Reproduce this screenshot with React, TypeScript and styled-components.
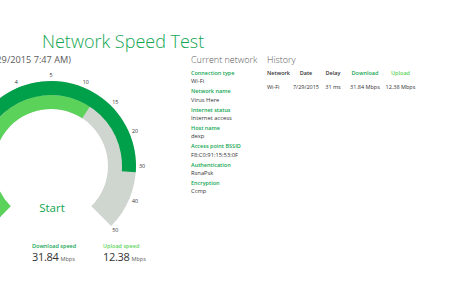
import React from 'react';
import styled, { createGlobalStyle } from 'styled-components';

const Green = '#11a651';
const DarkRing = '#00a04a';
const LightGreen = '#5bd35b';
const GrayRing = '#cfd5cf';
const TextDark = '#333333';
const TextSoft = '#5a5a5a';

const GlobalStyle = createGlobalStyle`
  html, body {
    margin: 0;
    padding: 0;
    background: #ffffff;
    overflow: hidden;
  }
  body {
    font-family: 'Open Sans', 'Noto Sans', sans-serif;
    color: ${TextDark};
  }
`;

const Page = styled.div`
  width: 450px;
  height: 281px;
  overflow: hidden;
  display: flex;
  flex-direction: column;
`;

const Title = styled.h1`
  margin: 32px 0 0 42px;
  font-size: 18px;
  line-height: 18px;
  font-weight: 300;
  color: ${Green};
  white-space: nowrap;
`;

const Content = styled.div`
  display: flex;
  margin-top: 3px;
`;

const LeftPane = styled.div`
  width: 191px;
  flex: none;
  display: flex;
  flex-direction: column;
`;

const SubtitleBox = styled.div`
  width: 71px;
  height: 14px;
  display: flex;
  justify-content: flex-end;
`;

const Subtitle = styled.span`
  font-size: 9.2px;
  line-height: 14px;
  color: ${TextSoft};
  white-space: nowrap;
`;

const GaugeWrap = styled.div`
  position: relative;
  height: 176px;
`;

const GaugeSvg = styled.svg`
  display: block;
  overflow: visible;
`;

const TickLabel = styled.text`
  font-size: 5.3px;
  fill: ${TextDark};
`;

const StartButton = styled.button`
  position: absolute;
  left: 52px;
  top: 140px;
  transform: translate(-50%, -50%);
  border: none;
  background: transparent;
  padding: 0;
  font-family: inherit;
  font-size: 11.5px;
  color: ${Green};
  cursor: pointer;
`;

const Speeds = styled.div`
  display: flex;
  padding-left: 32px;
`;

const SpeedItem = styled.div`
  width: 71px;
  display: flex;
  flex-direction: column;
`;

const SpeedLabel = styled.div<{ $tone: string }>`
  font-size: 5.5px;
  line-height: 7px;
  font-weight: 600;
  color: ${(p) => p.$tone};
  white-space: nowrap;
`;

const SpeedValue = styled.div`
  font-size: 11px;
  line-height: 14px;
  letter-spacing: -0.3px;
  color: ${TextDark};
  white-space: nowrap;
`;

const Unit = styled.span`
  font-size: 5.5px;
  letter-spacing: 0;
  color: ${TextSoft};
  margin-left: 2px;
`;

const NetworkCol = styled.div`
  width: 76px;
  flex: none;
  display: flex;
  flex-direction: column;
`;

const Heading = styled.h2`
  margin: 0;
  font-size: 9px;
  line-height: 14px;
  font-weight: 300;
  color: ${TextSoft};
  white-space: nowrap;
`;

const FieldList = styled.dl`
  margin: 2px 0 0;
`;

const FieldLabel = styled.dt`
  font-size: 5.5px;
  line-height: 8.4px;
  font-weight: 600;
  color: ${Green};
  white-space: nowrap;
`;

const FieldValue = styled.dd`
  margin: 0;
  font-size: 5.8px;
  line-height: 9.9px;
  color: ${TextDark};
  white-space: nowrap;
`;

const HistoryCol = styled.div`
  flex: 1;
  display: flex;
  flex-direction: column;
`;

const HistoryGrid = styled.div`
  margin-top: 2px;
  display: grid;
  grid-template-columns: 24px 30px 24px 40px 31px;
  grid-auto-rows: 8px;
  row-gap: 6px;
`;

const Cell = styled.div<{ $tone?: string; $left?: boolean; $head?: boolean }>`
  font-size: 5.5px;
  line-height: 8px;
  font-weight: ${(p) => (p.$head ? 600 : 400)};
  color: ${(p) => p.$tone ?? TextDark};
  text-align: ${(p) => (p.$left ? 'left' : 'center')};
  white-space: nowrap;
`;

const CX = 51;
const CY = 99;
const TICKS = [0, 0.5, 1, 2, 3, 4, 5, 10, 15, 20, 30, 40, 50];

const toAngle = (v: number) => {
  for (let i = 0; i < TICKS.length - 1; i++) {
    if (v <= TICKS[i + 1]) {
      const f = (v - TICKS[i]) / (TICKS[i + 1] - TICKS[i]);
      return -135 + (i + f) * 22.5;
    }
  }
  return 135;
};

const pt = (r: number, a: number) => {
  const rad = (a * Math.PI) / 180;
  return `${(CX + r * Math.sin(rad)).toFixed(2)} ${(CY - r * Math.cos(rad)).toFixed(2)}`;
};

const sector = (r0: number, r1: number, a0: number, a1: number) => {
  const large = a1 - a0 > 180 ? 1 : 0;
  return `M ${pt(r1, a0)} A ${r1} ${r1} 0 ${large} 1 ${pt(r1, a1)} L ${pt(r0, a1)} A ${r0} ${r0} 0 ${large} 0 ${pt(r0, a0)} Z`;
};

const fields = [
  ['Connection type', 'Wi-Fi'],
  ['Network name', 'Virus Here'],
  ['Internet status', 'Internet access'],
  ['Host name', 'dexp'],
  ['Access point BSSID', 'F8:C0:91:15:53:0F'],
  ['Authentication', 'RsnaPsk'],
  ['Encryption', 'Ccmp'],
];

const download = 31.84;
const upload = 12.38;

const Gauge = () => (
  <GaugeWrap>
    <GaugeSvg width={191} height={176}>
      <path d={sector(57, 85, -135, 135)} fill={GrayRing} />
      <path d={sector(57, 71, -135, toAngle(upload))} fill={LightGreen} />
      <path d={sector(71, 85, -135, toAngle(download))} fill={DarkRing} />
      {TICKS.map((t, i) => {
        const a = ((-135 + i * 22.5) * Math.PI) / 180;
        return (
          <TickLabel
            key={t}
            x={CX + 91 * Math.sin(a)}
            y={CY - 91 * Math.cos(a)}
            textAnchor="middle"
            dominantBaseline="central"
          >
            {t}
          </TickLabel>
        );
      })}
    </GaugeSvg>
    <StartButton>Start</StartButton>
  </GaugeWrap>
);

export default function App() {
  return (
    <Page>
      <GlobalStyle />
      <Title>Network Speed Test</Title>
      <Content>
        <LeftPane>
          <SubtitleBox>
            <Subtitle>Last tested (7/29/2015 7:47 AM)</Subtitle>
          </SubtitleBox>
          <Gauge />
          <Speeds>
            <SpeedItem>
              <SpeedLabel $tone={Green}>Download speed</SpeedLabel>
              <SpeedValue>
                {download.toFixed(2)}
                <Unit>Mbps</Unit>
              </SpeedValue>
            </SpeedItem>
            <SpeedItem>
              <SpeedLabel $tone={LightGreen}>Upload speed</SpeedLabel>
              <SpeedValue>
                {upload.toFixed(2)}
                <Unit>Mbps</Unit>
              </SpeedValue>
            </SpeedItem>
          </Speeds>
        </LeftPane>
        <NetworkCol>
          <Heading>Current network</Heading>
          <FieldList>
            {fields.map(([label, value]) => (
              <React.Fragment key={label}>
                <FieldLabel>{label}</FieldLabel>
                <FieldValue>{value}</FieldValue>
              </React.Fragment>
            ))}
          </FieldList>
        </NetworkCol>
        <HistoryCol>
          <Heading>History</Heading>
          <HistoryGrid>
            <Cell $head $left>Network</Cell>
            <Cell $head>Date</Cell>
            <Cell $head>Delay</Cell>
            <Cell $head $tone={Green}>Download</Cell>
            <Cell $head $tone={LightGreen}>Upload</Cell>
            <Cell $left>Wi-Fi</Cell>
            <Cell>7/29/2015</Cell>
            <Cell>31 ms</Cell>
            <Cell>31.84 Mbps</Cell>
            <Cell>12.38 Mbps</Cell>
          </HistoryGrid>
        </HistoryCol>
      </Content>
    </Page>
  );
}
